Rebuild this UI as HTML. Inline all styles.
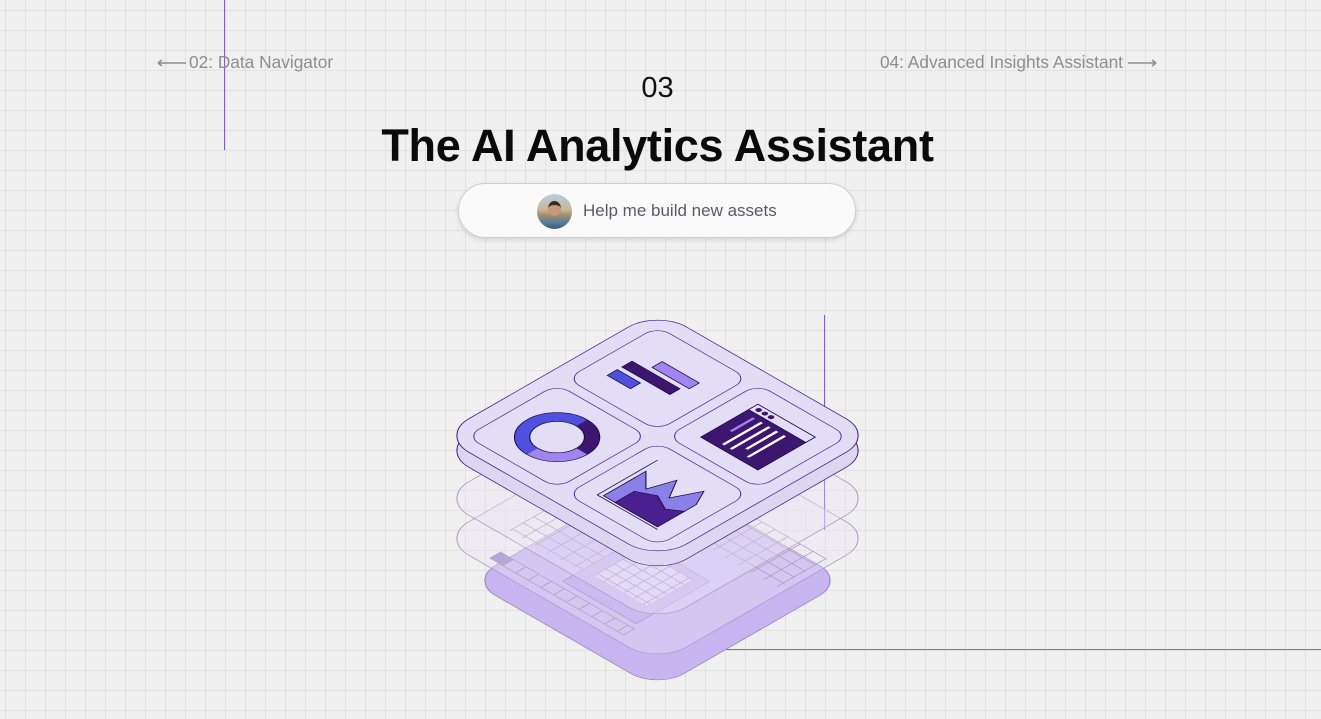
<!DOCTYPE html>
<html><head><meta charset="utf-8"><style>
*{margin:0;padding:0;box-sizing:border-box}
body{width:1321px;height:719px;overflow:hidden;position:relative;background:#f0f0f0;font-family:"Liberation Sans",sans-serif;
background-image:linear-gradient(#e1e1e1 1px,transparent 1px),linear-gradient(90deg,#e1e1e1 1px,transparent 1px);
background-size:20px 20px;background-position:0 10px,5px 0}
.abs{position:absolute}
.nav{font-size:17.3px;color:#8d8d8d;top:52px}
.slab{position:absolute;left:657px;width:309px;height:309px;margin-left:-154.5px;border-radius:42px}
.tile{position:absolute;width:129px;height:129px;border:1.5px solid #4a2a8c;border-radius:18px;background:#e3def6}
</style></head><body>
<div class="abs" style="left:224px;top:0;width:1px;height:150px;background:#7b5fd6"></div>
<div class="abs" style="left:824px;top:315px;width:1px;height:215px;background:#7b5fd6"></div>
<div class="abs" style="left:692px;top:649px;width:629px;height:1px;background:#7a7a8a"></div>

<div class="abs nav" style="left:157px">
<svg width="30" height="10" style="vertical-align:middle;margin-right:2px"><path d="M1 5H29M1 5L5 2M1 5L5 8" stroke="#8d8d8d" stroke-width="1.5" fill="none"/></svg>02: Data Navigator</div>
<div class="abs nav" style="right:164px">04: Advanced Insights Assistant<svg width="30" height="10" style="vertical-align:middle;margin-left:4px"><path d="M1 5H29M29 5L25 2M29 5L25 8" stroke="#8d8d8d" stroke-width="1.5" fill="none"/></svg></div>

<div class="abs" style="left:0;width:1315px;top:72px;text-align:center;font-size:29px;color:#111">03</div>
<div class="abs" style="left:0;width:1315px;top:120px;text-align:center;font-size:45px;font-weight:bold;color:#0a0a0a;letter-spacing:-0.3px">The AI Analytics Assistant</div>
<div class="abs" style="left:458px;top:183px;width:398px;height:55px;border-radius:28px;background:#fafafa;border:1px solid #d0d0d0;box-shadow:0 2px 5px rgba(0,0,0,.12)">
<div class="abs" style="left:78px;top:10px;width:35px;height:35px;border-radius:50%;background:linear-gradient(180deg,#b8cfe0 0%,#c7b79a 45%,#a58d6a 60%,#5c7f9e 80%,#3d5a78 100%)">
<div class="abs" style="left:11px;top:7px;width:13px;height:15px;border-radius:50%;background:#c79878;border-top:4px solid #3a2a20"></div></div>
<div class="abs" style="left:124px;top:17px;font-size:17px;color:#5d5868">Help me build new assets</div>
</div>

<!-- bottom purple slab -->
<div class="slab" style="top:447px;width:267px;height:267px;margin-left:-133.5px;transform:scaleY(0.576) rotate(45deg);background:#c7b5f2;border:1px solid #8f7fb0;border-radius:38px"></div>
<!-- grid tables -->
<div class="slab" style="top:400px;transform:scaleY(0.575) rotate(45deg);background:transparent">
 <div class="abs" style="left:20px;top:170px;width:120px;height:60px;background-image:linear-gradient(#8a7fa0 1px,transparent 1px),linear-gradient(90deg,#8a7fa0 1px,transparent 1px);background-size:18px 15px;border-top:10px solid #a898c8"></div>
 <div class="abs" style="left:170px;top:40px;width:110px;height:70px;background-image:linear-gradient(#8a7fa0 1px,transparent 1px),linear-gradient(90deg,#8a7fa0 1px,transparent 1px);background-size:18px 15px"></div>
 <div class="abs" style="left:120px;top:150px;width:105px;height:105px;background:#b9a5f0;border:1px solid #8a7fa0"></div>
 <div class="abs" style="left:135px;top:160px;width:75px;height:65px;background-image:linear-gradient(#8a7fa0 1px,transparent 1px),linear-gradient(90deg,#8a7fa0 1px,transparent 1px);background-size:14px 12px;background-color:#d8cdf7"></div>
 <div class="abs" style="left:40px;top:262px;width:190px;height:16px;background-image:linear-gradient(90deg,#8a7fa0 1px,transparent 1px);background-size:18px 16px;border:1px solid #8a7fa0;border-left:18px solid #9a84c4"></div>
</div>
<!-- transparent layers -->
<div class="slab" style="top:384px;transform:scaleY(0.575) rotate(45deg);background:rgba(235,230,245,.35);border:1.5px solid #a79bbb"></div>
<div class="slab" style="top:344px;transform:scaleY(0.575) rotate(45deg);background:rgba(235,230,245,.35);border:1.5px solid #a79bbb"></div>
<!-- top slab thickness -->
<div class="slab" style="top:296px;transform:scaleY(0.575) rotate(45deg);background:#ddd6f1;border:1.5px solid #3b1a7a"></div>
<!-- top slab -->
<div class="slab" style="top:281px;transform:scaleY(0.575) rotate(45deg);background:#e2dcf4;border:1.5px solid #3b1a7a">
 <div class="tile" style="left:19px;top:19px">
  <svg width="129" height="129" viewBox="0 0 118 118"><rect x="22" y="55" width="62" height="13" fill="#3d1670" stroke="#1a0a3a"/><rect x="42" y="36" width="48" height="13" fill="#a084f0" stroke="#1a0a3a"/><rect x="22" y="74" width="30" height="13" fill="#4f4fe0" stroke="#1a0a3a"/></svg></div>
 <div class="tile" style="left:161px;top:19px">
  <svg width="129" height="129" viewBox="0 0 118 118"><rect x="22" y="22" width="74" height="74" fill="#3d1670" stroke="#1a0a3a"/><rect x="22" y="22" width="74" height="12" fill="#e3def6" stroke="#1a0a3a"/><circle cx="29" cy="28" r="3" fill="#3d1670"/><circle cx="37" cy="28" r="3" fill="#3d1670"/><circle cx="45" cy="28" r="3" fill="#3d1670"/><path d="M35 40V70" stroke="#a084f0" stroke-width="3"/><path d="M45 40V90M55 40V90M65 40V80M75 40V88" stroke="#fff" stroke-width="3"/></svg></div>
 <div class="tile" style="left:19px;top:161px">
  <svg width="129" height="129" viewBox="0 0 118 118"><circle cx="59" cy="59" r="32" fill="none" stroke="#5050e0" stroke-width="14"/><path d="M59 27A32 32 0 0 1 91 59" fill="none" stroke="#3d1670" stroke-width="14"/><path d="M91 59A32 32 0 0 1 59 91" fill="none" stroke="#a084f0" stroke-width="14"/><circle cx="59" cy="59" r="39" fill="none" stroke="#1a0a3a"/><circle cx="59" cy="59" r="25" fill="none" stroke="#1a0a3a"/></svg></div>
 <div class="tile" style="left:161px;top:161px">
  <svg width="129" height="129" viewBox="0 0 118 118"><path d="M25 95V40L45 60L55 30L70 55L85 25L95 45V95Z" fill="#8a80e8" stroke="#1a0a3a"/><path d="M40 95V70L60 60L80 70L95 60V95Z" fill="#4a2090" stroke="#1a0a3a"/><path d="M20 20V98H98" fill="none" stroke="#1a0a3a"/></svg></div>
</div>
</body></html>
